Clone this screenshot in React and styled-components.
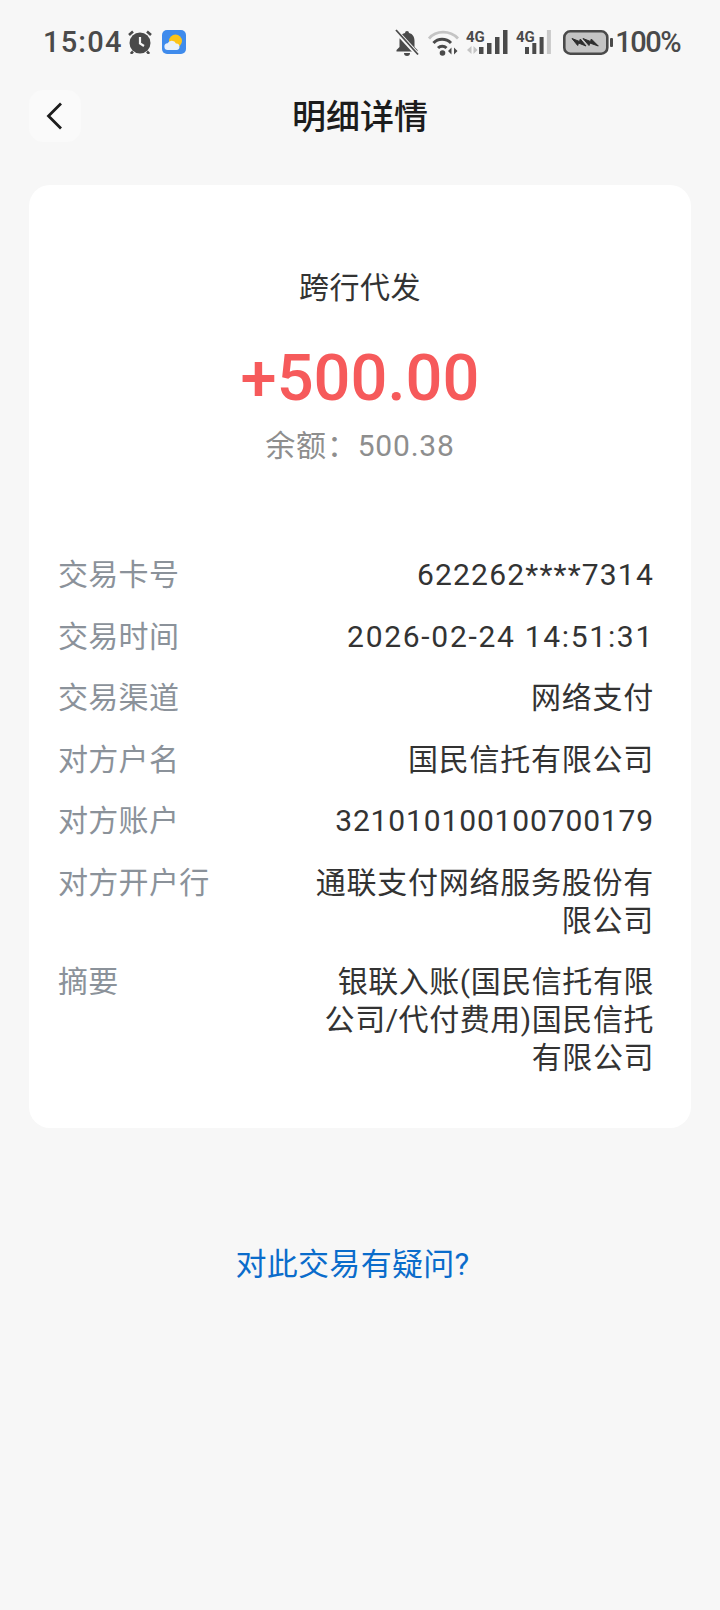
import React from "react";
import styled, { createGlobalStyle } from "styled-components";

const GlobalStyle = createGlobalStyle`
  html, body {
    margin: 0;
    padding: 0;
    background: #f7f7f7;
  }
  body {
    font-family: Roboto, "Noto Sans CJK SC", sans-serif;
  }
`;

const Page = styled.div`
  width: 720px;
  height: 1610px;
  overflow: hidden;
  background: #f7f7f7;
`;

const StatusBar = styled.div`
  height: 90px;
  box-sizing: border-box;
  padding: 0 40px 6px 43px;
  display: flex;
  align-items: center;
  justify-content: space-between;
  color: #4a4a4a;
`;
const StatusGroup = styled.div`
  display: flex;
  align-items: center;
`;
const Clock = styled.span`
  font-size: 29px;
  font-weight: 500;
  letter-spacing: 1.2px;
  margin-right: 5px;
`;
const Percent = styled.span`
  font-size: 29px;
  font-weight: 500;
  letter-spacing: -1.5px;
  margin-left: 2px;
`;
const Icon = styled.svg`
  display: block;
  flex: none;
  margin-left: ${(props) => props.$gap || 0}px;
`;

const NavBar = styled.div`
  height: 52px;
  padding: 0 29px;
  position: relative;
  display: flex;
  align-items: center;
  justify-content: center;
`;
const BackButton = styled.div`
  position: absolute;
  left: 29px;
  top: 0;
  width: 52px;
  height: 52px;
  border-radius: 14px;
  background: #fafafa;
  display: flex;
  align-items: center;
  justify-content: center;
`;
const Title = styled.div`
  font-size: 34px;
  font-weight: 500;
  color: #1c1c1c;
  padding-bottom: 4px;
`;

const Card = styled.div`
  margin: 43px 29px 0;
  height: 943px;
  box-sizing: border-box;
  background: #fff;
  border-radius: 21px;
  padding: 83px 37px 0 29px;
`;
const Summary = styled.div`
  display: flex;
  flex-direction: column;
  align-items: center;
  padding-left: 8px;
`;
const TradeType = styled.div`
  font-size: 30px;
  line-height: 40px;
  color: #333;
  letter-spacing: 0.5px;
`;
const Amount = styled.div`
  font-size: 65px;
  line-height: 76px;
  font-weight: 500;
  color: #f65a5b;
  margin-top: 32px;
`;
const Balance = styled.div`
  font-size: 30px;
  line-height: 40px;
  color: #8e8e8e;
  margin-top: 10px;
  letter-spacing: 0.8px;
`;

const Rows = styled.div`
  margin-top: 90px;
  display: flex;
  flex-direction: column;
  gap: 23.5px;
`;
const Row = styled.div`
  display: flex;
  justify-content: space-between;
  align-items: flex-start;
  font-size: 30px;
  line-height: 38px;
`;
const Label = styled.div`
  color: #8b929a;
  white-space: nowrap;
  letter-spacing: 0.3px;
`;
const Value = styled.div`
  color: #333;
  text-align: right;
  width: 345px;
  letter-spacing: ${(props) => props.$spacing || 0.75}px;
`;

const Question = styled.div`
  margin-top: 117px;
  padding-right: 15px;
  text-align: center;
  font-size: 31px;
  line-height: 40px;
  letter-spacing: 0.3px;
  color: #0a6ccb;
`;

const details = [
  { label: "交易卡号", value: "622262****7314", spacing: 1.2 },
  { label: "交易时间", value: "2026-02-24 14:51:31", spacing: 1.7 },
  { label: "交易渠道", value: "网络支付" },
  { label: "对方户名", value: "国民信托有限公司" },
  { label: "对方账户", value: "321010100100700179", spacing: 0.85 },
  { label: "对方开户行", value: "通联支付网络服务股份有限公司" },
  { label: "摘要", value: "银联入账(国民信托有限公司/代付费用)国民信托有限公司", spacing: 0.55 },
];

function AlarmIcon() {
  return (
    <Icon width="24" height="24" viewBox="0 0 24 24">
      <circle cx="12" cy="13" r="10.500" fill="#4a4a4a" />
      <path d="M12 7v6.500l4 2.500" stroke="#f7f7f7" strokeWidth="2.200" fill="none" />
      <path d="M1 5 5 1.500M23 5l-4-3.500M5 21.500l-2.200 2.300M19 21.500l2.200 2.300" stroke="#4a4a4a" strokeWidth="2.600" fill="none" />
    </Icon>
  );
}

function WeatherIcon() {
  return (
    <Icon width="24" height="24" viewBox="0 0 24 24" $gap={10}>
      <rect width="24" height="24" rx="5" fill="#3f8bec" />
      <circle cx="13.500" cy="11" r="6.500" fill="#fcc419" />
      <path d="M6 20a3.400 3.400 0 0 1-.4-6.800A4.600 4.600 0 0 1 14 13.600a3.200 3.200 0 0 1 .5 6.400z" fill="#e9f1fb" />
    </Icon>
  );
}

function BellOffIcon() {
  return (
    <Icon width="24" height="27" viewBox="0 0 24 27">
      <path d="M12 2a2 2 0 0 1 2 2c4 1 5.500 4 5.500 8v6l3 3v1.500H1.500V21l3-3v-6c0-4 1.500-7 5.500-8a2 2 0 0 1 2-2z" fill="#4a4a4a" />
      <path d="M9 24h6a3 3 0 0 1-6 0z" fill="#4a4a4a" />
      <path d="M1.500 2.500l21 23" stroke="#f7f7f7" strokeWidth="4.500" />
      <path d="M1 1l22 24.500" stroke="#4a4a4a" strokeWidth="1.800" />
    </Icon>
  );
}

function WifiIcon() {
  return (
    <Icon width="31" height="27" viewBox="0 0 31 27" $gap={9}>
      <path d="M1 9.500C8 1 22 1 30 9.500" stroke="#c4c4c4" strokeWidth="2.800" fill="none" />
      <path d="M5.500 14c4.500-5 12.500-5 17.500 0" stroke="#4a4a4a" strokeWidth="3" fill="none" />
      <path d="M10 19c2.500-2.500 6-2.500 8.500 0" stroke="#4a4a4a" strokeWidth="3" fill="none" />
      <circle cx="14.500" cy="24" r="2.800" fill="#4a4a4a" />
      <path d="M23.500 18.500v7l-3.500-3.500zM26 18.500v7l3.500-3.500z" fill="#4a4a4a" />
    </Icon>
  );
}

function SignalIcon({ width, gap, barStart, barWidth, pitch, dimLast, arrows }) {
  const heights = [7, 11, 17, 24];
  return (
    <Icon width={width} height="26" viewBox={`0 0 ${width} 26`} $gap={gap}>
      <text x="0" y="13" fontSize="15" fontWeight="700" fontFamily="Roboto, sans-serif" fill="#4a4a4a">4G</text>
      {heights.map((h, i) => (
        <rect
          key={h}
          x={barStart + i * pitch}
          y={25 - h}
          width={barWidth}
          height={h}
          fill={dimLast && i === 3 ? "#c8c8c8" : "#4a4a4a"}
        />
      ))}
      {arrows && <path d="M5.500 17v8L1 21zM7.500 17v8l4-4z" fill="#c4c4c4" />}
    </Icon>
  );
}

function BatteryIcon() {
  return (
    <Icon width="50" height="25" viewBox="0 0 50 25" $gap={11}>
      <rect x="1.300" y="1.300" width="43" height="22.400" rx="6" fill="#c4c4c4" stroke="#4a4a4a" strokeWidth="2.600" />
      <path d="M9 8.500l7.500 3 .8-2.500 5.700 7-7.500-3-.8 2.500zM20 8.500l7.500 3 .8-2.500 7 7-8.500-3-.8 2.500z" fill="#2e2e2e" stroke="#2e2e2e" strokeWidth="1" strokeLinejoin="round" />
      <rect x="47" y="8" width="3" height="9" rx="1" fill="#4a4a4a" />
    </Icon>
  );
}

export default function App() {
  return (
    <Page>
      <GlobalStyle />
      <StatusBar>
        <StatusGroup>
          <Clock>15:04</Clock>
          <AlarmIcon />
          <WeatherIcon />
        </StatusGroup>
        <StatusGroup>
          <BellOffIcon />
          <WifiIcon />
          <SignalIcon width={42} gap={7} barStart={13} barWidth={4.500} pitch={8} arrows />
          <SignalIcon width={36} gap={8} barStart={9} barWidth={4} pitch={7.300} dimLast />
          <BatteryIcon />
          <Percent>100%</Percent>
        </StatusGroup>
      </StatusBar>
      <NavBar>
        <BackButton>
          <svg width="20" height="30" viewBox="0 0 20 30">
            <path d="M16 2.500 3.500 15 16 27.500" stroke="#1c1c1c" strokeWidth="2.800" fill="none" />
          </svg>
        </BackButton>
        <Title>明细详情</Title>
      </NavBar>
      <Card>
        <Summary>
          <TradeType>跨行代发</TradeType>
          <Amount>+500.00</Amount>
          <Balance>余额：500.38</Balance>
        </Summary>
        <Rows>
          {details.map((item) => (
            <Row key={item.label}>
              <Label>{item.label}</Label>
              <Value $spacing={item.spacing}>{item.value}</Value>
            </Row>
          ))}
        </Rows>
      </Card>
      <Question>对此交易有疑问?</Question>
    </Page>
  );
}
